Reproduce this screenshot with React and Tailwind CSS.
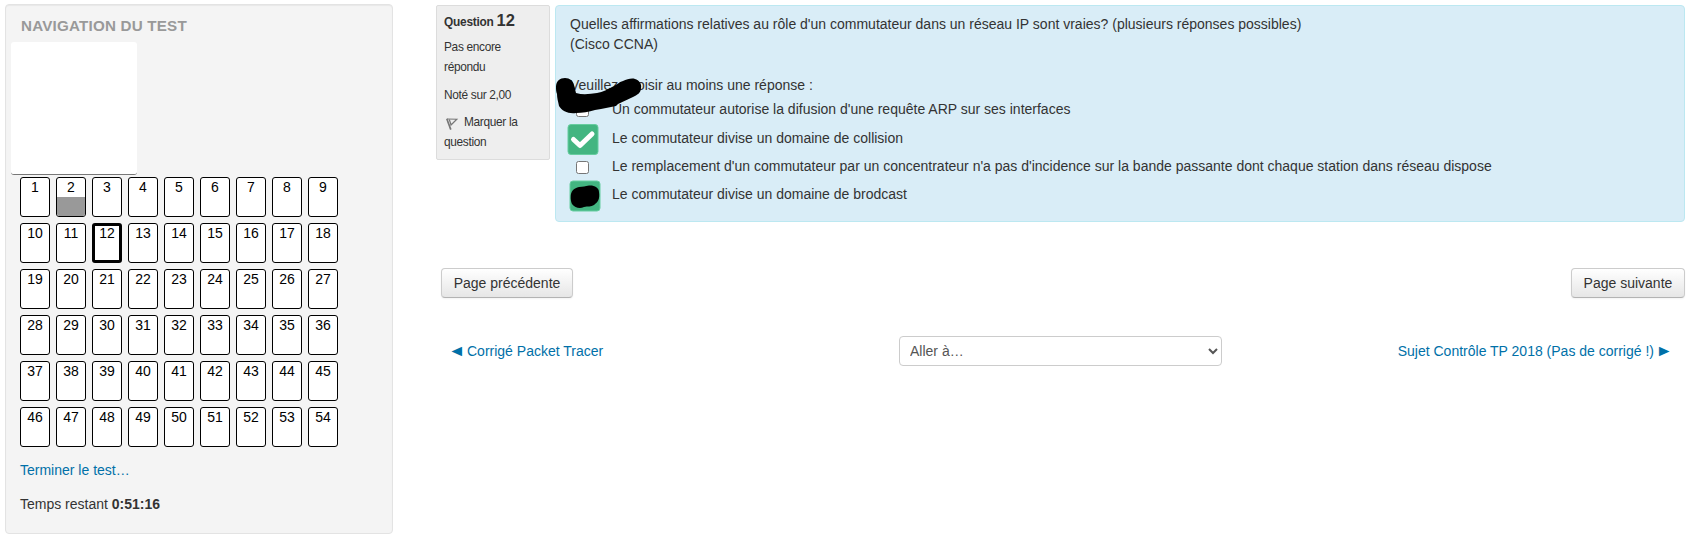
const numbers = Array.from({ length: 54 }, (_, i) => i + 1);

function QuizCell({ n }) {
  const current = n === 12;
  return (
    <a
      className={
        "relative flex h-10 w-[30px] justify-center overflow-hidden rounded-[3px] bg-white text-sm leading-5 text-black " +
        (current ? "border-3 border-black" : "border border-black")
      }
    >
      {n === 2 && <span className="absolute inset-x-0 bottom-0 h-[19px] bg-[#999999]" />}
      <span className={current ? "-mt-[3px]" : "-mt-px"}>{n}</span>
    </a>
  );
}

function Navigation() {
  return (
    <aside className="mt-1 ml-[5px] flex h-[530px] w-[388px] flex-col rounded-[4px] border border-[#e3e3e3] bg-[#f4f4f4] shadow-[inset_0_1px_1px_rgba(0,0,0,0.05)]">
      <h2 className="mt-[11px] ml-[15px] h-[26px] text-[15.2px] leading-5 font-bold tracking-[0.2px] whitespace-nowrap text-[#999999]">
        NAVIGATION DU TEST
      </h2>
      <div className="ml-[5px] h-[133px] w-[126px] rounded-[3px] border-b border-[#777777] bg-white" />
      <div className="mt-[2px] ml-[14px] grid grid-cols-[repeat(9,30px)] gap-1.5">
        {numbers.map((n) => (
          <QuizCell key={n} n={n} />
        ))}
      </div>
      <a className="mt-[13px] ml-[14px] text-sm leading-5 text-[#0070a8]">Terminer le test…</a>
      <p className="mt-[14px] ml-[14px] text-sm leading-5">
        Temps restant <b>0:51:16</b>
      </p>
    </aside>
  );
}

function FlagIcon() {
  return (
    <svg className="mr-[3px] ml-0.5 inline-block h-3 w-3 overflow-visible align-[-4px]" viewBox="0 0 12 12" fill="none" stroke="#777">
      <path d="M0.8 0.8 4.8 11.6" strokeWidth="1.7" />
      <path d="M1 1 10.8 1.2 4.5 7.5M3.2 1.2 5 6.8" strokeWidth="1.2" />
    </svg>
  );
}

function Info() {
  return (
    <div className="h-[155px] w-[114px] shrink-0 rounded-[2px] border border-[#dcdcdc] bg-[#eeeeee] pt-1 pl-[7px] text-[11.9px] leading-5 tracking-[-0.33px]">
      <h3 className="h-[27px] text-[11.9px] font-bold tracking-[-0.25px] whitespace-nowrap">
        Question <span className="text-[16.5px] tracking-normal">12</span>
      </h3>
      <div>Pas encore<br />répondu</div>
      <div className="mt-2">Noté sur 2,00</div>
      <div className="mt-[7px]"><FlagIcon /> Marquer la<br />question</div>
    </div>
  );
}

function Box() {
  return <span className="block h-[13px] w-[13px] rounded-[2.5px] border border-[#767676] bg-white" />;
}

function Option({ children, mark }) {
  return (
    <div className="flex h-7 items-start">
      <div className="flex h-5 w-[42px] items-center pl-1.5 pt-0.5">{mark}</div>
      <span className="leading-5">{children}</span>
    </div>
  );
}

function Question() {
  return (
    <div className="relative ml-[5px] h-[217px] w-[1130px] rounded-[4px] border border-[#bce8f1] bg-[#d9edf7] pt-2 pl-[14px] text-sm leading-5">
      <p>
        Quelles affirmations relatives au rôle d'un commutateur dans un réseau IP sont vraies? (plusieurs réponses possibles)
        <br />
        (Cisco CCNA)
      </p>
      <p className="mt-[21px]">Veuillez choisir au moins une réponse :</p>
      <div className="mt-1">
        <Option mark={<Box />}>Un commutateur autorise la difusion d'une requête ARP sur ses interfaces</Option>
        <div className="h-px" />
        <Option>Le commutateur divise un domaine de collision</Option>
        <Option mark={<Box />}>
          Le remplacement d'un commutateur par un concentrateur n'a pas d'incidence sur la bande passante dont chaque station dans réseau dispose
        </Option>
        <Option>Le commutateur divise un domaine de brodcast</Option>
      </div>
      <svg className="absolute -top-px -left-px h-[217px] w-[120px]" viewBox="0 0 120 217">
        <path
          d="M1 82C1 76 5 73 10 73C15 73 18 76 19 80L21 88C28 90 35 89 42 88C48 87 53 84 57 82C62 80 64 77 68 76C72 74 77 73 80 74C84 75 87 79 86 83C86 88 82 90 78 92L63 99L61 101L46 104L40 105C34 107 27 108 21 108C13 109 7 106 4 101C3 96 2 93 2 89C1 87 1 84 1 82Z"
          fill="#000"
        />
        <rect x="13" y="119.5" width="30" height="30" rx="3" fill="#43b581" stroke="#67cda0" />
        <path d="M18.5 134.5 25 140.5 37 129" fill="none" stroke="#fff" strokeWidth="5" strokeLinecap="round" strokeLinejoin="round" />
        <rect x="15" y="176" width="30" height="30" rx="3" fill="#43b581" stroke="#67cda0" />
        <path
          d="M15.7 191C16 186 19 183 24 182C28 182 30 181 34 180.5C39 180 44 182.5 44 187C45 194 43 197 39 200C36 202 33 201 29 202C25 204 20 203 17 199C16 197 15.5 194 15.7 191Z"
          fill="#000"
        />
      </svg>
    </div>
  );
}

function PageButton({ children }) {
  return (
    <button className="h-[30px] rounded-[4px] border border-[#cccccc] border-b-[#b3b3b3] bg-linear-to-b from-white to-[#e6e6e6] px-[11.7px] text-sm leading-5 shadow-[0_1px_2px_rgba(0,0,0,0.05)]">
      {children}
    </button>
  );
}

export default function App() {
  return (
    <div className="flex h-[541px] w-[1692px] overflow-hidden bg-white font-['Liberation_Sans',Arial,sans-serif] text-[#333333]">
      <Navigation />
      <main className="ml-[43px] w-[1249px] pt-[5px]">
        <div className="flex items-start">
          <Info />
          <Question />
        </div>
        <div className="mt-[46px] ml-[5px] flex justify-between">
          <PageButton>Page précédente</PageButton>
          <PageButton>Page suivante</PageButton>
        </div>
        <div className="mt-[38px] grid grid-cols-[463px_323px_1fr] items-center text-sm leading-5">
          <a className="flex pl-[12px] text-[#0070a8]">
            <span className="w-[19px] origin-left scale-x-110 text-[16px]">◄</span>Corrigé Packet Tracer
          </a>
          <select className="h-[30px] w-[323px] rounded-[4px] border border-[#cccccc] bg-white px-1.5 text-sm text-[#555555]">
            <option>Aller à…</option>
          </select>
          <a className="flex justify-end pr-[12px] text-[#0070a8]">
            Sujet Contrôle TP 2018 (Pas de corrigé !)
            <span className="w-[19px] origin-right scale-x-110 text-right text-[16px]">►</span>
          </a>
        </div>
      </main>
    </div>
  );
}
